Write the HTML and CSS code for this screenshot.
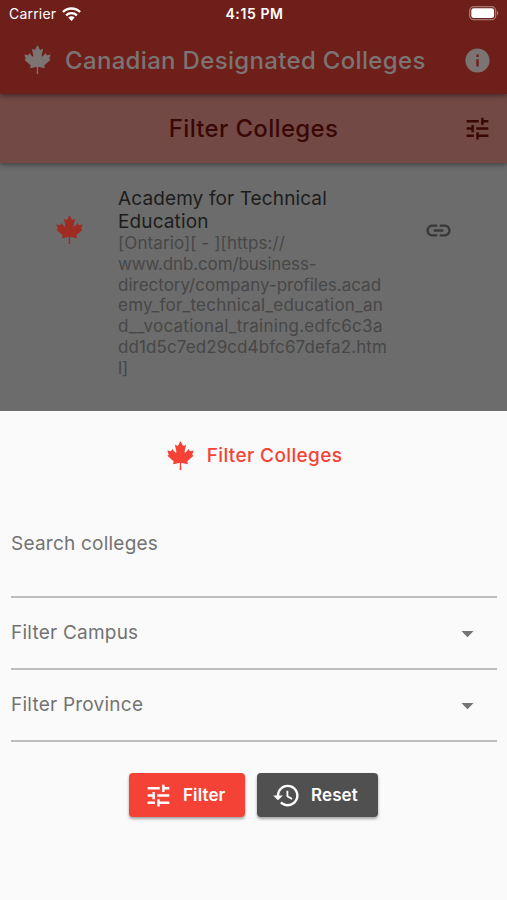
FILE: index.html
```html
<!DOCTYPE html>
<html lang="en">
<head>
<meta charset="utf-8">
<title>Canadian Designated Colleges</title>
<link rel="stylesheet" href="styles.css">
</head>
<body>
<svg class="defs" width="0" height="0" aria-hidden="true">
  <symbol id="leaf" viewBox="0 0 512 512"><path d="M383.8 351.7c2.5-2.5 105.2-92.4 105.2-92.4l-17.5-7.5c-10-4.9-7.4-11.5-5-17.4 2.4-7.6 20.1-67.3 20.1-67.3s-47.7 10-57.7 12.5c-7.5 2.4-10-2.5-12.5-7.5s-15-32.4-15-32.4-52.6 59.9-55.1 62.3c-10 7.5-20.1 0-17.6-10 0-10 27.6-129.6 27.6-129.6s-30.1 17.4-40.1 22.4c-7.5 5-12.6 5-17.6-5C293.5 72.3 255.9 0 255.9 0s-37.5 72.3-42.5 79.8c-5 10-10 10-17.6 5-10-5-40.1-22.4-40.1-22.4S183.3 182 183.3 192c2.5 10-7.5 17.5-17.6 10-2.5-2.5-55.1-62.3-55.1-62.3S98.1 167 95.6 172s-5 9.9-12.5 7.5C73 177 25.4 167 25.4 167s17.6 59.7 20.1 67.3c2.4 6 5 12.5-5 17.4L23 259.3s102.6 89.9 105.2 92.4c5.1 5 10 7.5 5.1 22.5-5.1 15-10.1 35.1-10.1 35.1s95.2-20.1 105.3-22.6c8.7-.9 18.3 2.5 18.3 12.5S241 512 241 512h30s-5.8-102.7-5.8-112.8 9.5-13.4 18.4-12.5c10 2.5 105.2 22.6 105.2 22.6s-5-20.1-10-35.1 0-17.5 5-22.5z"/></symbol>
  <symbol id="tune" viewBox="0 0 24 24"><path d="M3 17v2h6v-2H3zM3 5v2h10V5H3zm10 16v-2h8v-2h-8v-2h-2v6h2zM7 9v2H3v2h4v2h2V9H7zm14 4v-2H11v2h10zm-6-4h2V7h4V5h-4V3h-2v6z"/></symbol>
  <symbol id="info" viewBox="0 0 24 24"><path d="M12 2C6.48 2 2 6.48 2 12s4.48 10 10 10 10-4.48 10-10S17.52 2 12 2zm1 15h-2v-6h2v6zm0-8h-2V7h2v2z"/></symbol>
  <symbol id="link" viewBox="0 0 24 24"><path d="M3.9 12c0-1.71 1.39-3.1 3.1-3.1h4V7H7c-2.76 0-5 2.24-5 5s2.24 5 5 5h4v-1.9H7c-1.71 0-3.1-1.39-3.1-3.1zM8 13h8v-2H8v2zm9-6h-4v1.900h4c1.710 0 3.100 1.390 3.100 3.100s-1.390 3.100-3.100 3.100h-4V17h4c2.760 0 5-2.240 5-5s-2.240-5-5-5z"/></symbol>
  <symbol id="restore" viewBox="0 0 24 24"><path d="M13 3c-4.970 0-9 4.030-9 9H1l3.890 3.890.070.140L9 12H6c0-3.870 3.130-7 7-7s7 3.130 7 7-3.130 7-7 7c-1.930 0-3.680-.790-4.940-2.060l-1.420 1.420C8.270 19.990 10.510 21 13 21c4.970 0 9-4.030 9-9s-4.030-9-9-9zm-1 5v5l4.280 2.540.720-1.210-3.500-2.080V8H12z"/></symbol>
  <symbol id="arrow" viewBox="0 0 24 24"><path d="M7 10l5 5 5-5z"/></symbol>
</svg>
<div class="screen">
  <div class="statusbar">
    <div class="carrier"><span>Carrier</span>
      <svg class="wifi" viewBox="0 0 19 14"><g fill="none" stroke="currentColor" stroke-width="2.300"><path d="M.9 5A12.300 12.300 0 0 1 18.100 5"/><path d="M4.100 8.300A7.800 7.800 0 0 1 14.900 8.300"/></g><path d="M9.500 14L6.300 10.600A4.600 4.600 0 0 1 12.700 10.600Z"/></svg>
    </div>
    <span class="time">4:15 PM</span>
    <svg class="battery" viewBox="0 0 31 15"><rect x=".7" y=".7" width="26" height="13" rx="4" fill="none" stroke="#a97773" stroke-width="1.300"/><rect x="2.300" y="2.300" width="22.800" height="9.800" rx="2.400"/><path d="M28 4.800q2.600 2.400 0 4.800z" fill="#a97773"/></svg>
  </div>
  <header class="appbar">
    <svg class="leaf"><use href="#leaf"/></svg>
    <h1>Canadian Designated Colleges</h1>
    <svg class="icon info"><use href="#info"/></svg>
  </header>
  <div class="filterbar">
    <h2>Filter Colleges</h2>
    <svg class="icon tune"><use href="#tune"/></svg>
  </div>
  <main class="list">
    <article class="college">
      <svg class="leaf"><use href="#leaf"/></svg>
      <div class="details">
        <h3>Academy for Technical<br>Education</h3>
        <p><span class="open">[Ontario][ - ][https://</span><br><span class="tight">www.dnb.com/business-</span><br>directory/company-profiles.acad<br><span class="wide">emy_for_technical_education_an</span><br><span class="wider">d__vocational_training.edfc6c3a</span><br><span class="open">dd1d5c7ed29cd4bfc67defa2.htm</span><br>l]</p>
      </div>
      <svg class="icon link"><use href="#link"/></svg>
    </article>
  </main>
  <section class="sheet">
    <div class="sheet-title">
      <svg class="leaf"><use href="#leaf"/></svg>
      <h2>Filter Colleges</h2>
    </div>
    <div class="field search"><span>Search colleges</span></div>
    <div class="field select"><span>Filter Campus</span><svg class="icon"><use href="#arrow"/></svg></div>
    <div class="field select"><span>Filter Province</span><svg class="icon"><use href="#arrow"/></svg></div>
    <div class="actions">
      <button class="btn primary"><svg class="icon"><use href="#tune"/></svg><span>Filter</span></button>
      <button class="btn reset"><svg class="icon"><use href="#restore"/></svg><span>Reset</span></button>
    </div>
  </section>
</div>
</body>
</html>
```
FILE: styles.css
```css
* { box-sizing: border-box; }
body { margin: 0; font-family: Inter, "Liberation Sans", sans-serif; }
h1, h2, h3, p { margin: 0; font-weight: 400; white-space: nowrap; }
svg { display: block; fill: currentColor; flex: none; }
.defs { position: absolute; }
.screen { width: 507px; height: 900px; display: flex; flex-direction: column; overflow: hidden; background: #6c6c6c; }

.statusbar { height: 27px; display: grid; grid-template-columns: 1fr auto 1fr; align-items: center; padding: 0 7px 0 9px; background: #6f1f1a; color: #fff; z-index: 3; font-size: 14px; }
.carrier { display: flex; align-items: center; gap: 6px; letter-spacing: .2px; }
.wifi { width: 19px; height: 14px; }
.time { font-weight: 600; letter-spacing: .6px; }
.battery { width: 31px; height: 15px; justify-self: end; }

.leaf { width: 29px; height: 29px; }
.icon { width: 29px; height: 29px; }

.appbar { height: 67px; display: flex; align-items: center; padding: 0 15px 0 23px; background: #6f1f1a; color: #7b7472; box-shadow: 0 2px 5px rgba(0, 0, 0, .4); z-index: 2; }
.appbar h1 { margin-left: 13px; font-size: 24px; font-weight: 500; line-height: 32px; letter-spacing: .33px; }
.appbar .leaf { margin-top: -3px; }
.appbar .info { margin-left: auto; }

.filterbar { height: 69px; display: grid; grid-template-columns: 1fr auto 1fr; align-items: center; padding: 0 15px; background: #724945; color: #390805; box-shadow: 0 2px 5px rgba(0, 0, 0, .4); z-index: 1; }
.filterbar h2 { grid-column: 2; font-size: 24px; font-weight: 500; letter-spacing: .33px; }
.filterbar .tune { justify-self: end; }

.list { height: 248px; padding: 24px 54px 0 55px; }
.college { display: flex; }
.college .leaf { margin-top: 28px; color: #9e2c23; }
.details { width: 304px; padding-left: 34px; }
.details h3 { font-size: 19px; line-height: 23px; letter-spacing: .12px; color: #1c1c1c; }
.details p { font-size: 17px; line-height: 20.800px; color: #474747; }
.open { letter-spacing: .1px; }
.tight { letter-spacing: -.14px; }
.wide { letter-spacing: .23px; }
.wider { letter-spacing: .28px; }
.link { margin-top: 29px; margin-left: 36px; color: #383838; }

.sheet { flex: 1; padding: 0 10px 0 11px; background: #fafafa; color: #737373; }
.sheet-title { height: 88px; display: flex; align-items: center; justify-content: center; gap: 12px; color: #f44336; }
.sheet-title h2 { font-size: 19px; font-weight: 500; letter-spacing: .36px; }
.field { display: flex; border-bottom: 2px solid #bdbdbd; font-size: 19px; line-height: 24px; letter-spacing: .23px; }
.search { height: 99px; padding-top: 33px; }
.select { height: 72px; align-items: center; justify-content: space-between; padding-right: 15px; }
.actions { display: flex; gap: 12px; margin: 31px 0 0 118px; }
.btn { height: 44px; display: flex; align-items: center; gap: 10px; border: 0; border-radius: 4px; padding: 0 0 0 15px; font-family: inherit; font-size: 17px; font-weight: 600; letter-spacing: .1px; color: #fff; box-shadow: 0 2px 3px rgba(0, 0, 0, .35); }
.primary { width: 116px; background: #f44336; }
.reset { width: 121px; background: #505050; }
```
